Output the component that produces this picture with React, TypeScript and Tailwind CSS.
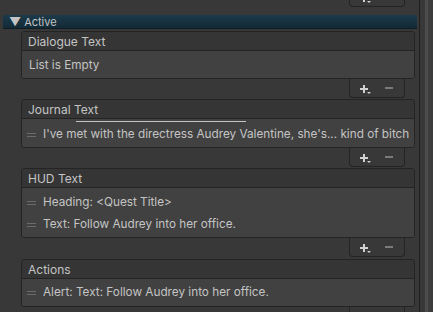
import React from 'react';

const Handle = () => (
  <div className="w-[9px] flex flex-col gap-[2px] mr-[7px]">
    <div className="h-px bg-[#6b6b6b]" />
    <div className="h-px bg-[#6b6b6b]" />
  </div>
);

const Row = ({ text }: { text: string }) => (
  <div className="h-[22px] flex items-center pl-[5px] pt-[1px]">
    <Handle />
    <span className="whitespace-nowrap">{text}</span>
  </div>
);

const Footer = ({ className = '' }: { className?: string }) => (
  <div
    className={`ml-[349px] w-[56px] h-[19px] shrink-0 border-x border-b border-[#242424] rounded-b-[4px] flex items-center ${className}`}
  >
    <div className="relative ml-[10px] w-[9px] h-[9px]">
      <div className="absolute left-0 top-[4px] w-[8px] h-[2px] bg-[#d0d0d0]" />
      <div className="absolute left-[3px] top-[1px] w-[2px] h-[8px] bg-[#d0d0d0]" />
      <div className="absolute left-[7px] top-[8px] w-0 h-0 border-x-[2px] border-x-transparent border-t-[2px] border-t-[#d0d0d0]" />
    </div>
    <div className="ml-[16px] w-[8px] h-[2px] bg-[#7a7a7a]" />
  </div>
);

const Panel = ({ title, children, bodyClass = '' }: { title: string; children: React.ReactNode; bodyClass?: string }) => (
  <div className="ml-[21px] w-[394px] shrink-0 border border-[#242424] rounded-[3px] overflow-hidden">
    <div className="h-[19px] bg-[#353535] border-b border-[#242424] flex items-center pl-[6px] pt-[1px] text-[12px]">{title}</div>
    <div className={`bg-[#414141] ${bodyClass}`}>{children}</div>
  </div>
);

export default function App() {
  return (
    <div className="w-[433px] h-[312px] bg-[#383838] flex overflow-hidden text-[11.75px] text-[#c4c4c4] font-['Inter',sans-serif]">
      <div className="w-[419px] flex flex-col">
        <Footer className="mt-[-12px]" />
        <div className="mt-[8px] ml-[3px] w-[414px] h-[14px] shrink-0 bg-gradient-to-b from-[#1b3a4a] to-[#132a36] border-b border-[#0e1c24] flex items-center pl-[6px] pt-[1px] text-[11px] leading-none">
          <span className="text-[12px] mr-[3px]">▼</span>
          Active
        </div>
        <div className="h-[2px] shrink-0" />
        <Panel title="Dialogue Text" bodyClass="h-[27px] flex items-center pl-[7px] pt-[2px]">
          List is Empty
        </Panel>
        <Footer />
        <div className="h-px shrink-0" />
        <Panel title="Journal Text" bodyClass="h-[28px] overflow-hidden">
          <div className="h-[4px] relative overflow-hidden">
            <span className="absolute left-[22px] top-[-10px] leading-none">Text:</span>
            <div className="absolute left-[54px] top-[2px] w-[170px] h-px bg-[#c4c4c4]" />
          </div>
          <Row text="I've met with the directress Audrey Valentine, she's... kind of bitch" />
        </Panel>
        <Footer />
        <div className="h-px shrink-0" />
        <Panel title="HUD Text" bodyClass="h-[49px] pt-[3px]">
          <Row text="Heading: <Quest Title>" />
          <Row text="Text: Follow Audrey into her office." />
        </Panel>
        <Footer />
        <div className="h-[2px] shrink-0" />
        <Panel title="Actions" bodyClass="h-[27px] flex items-center">
          <Row text="Alert: Text: Follow Audrey into her office." />
        </Panel>
        <Footer />
      </div>
      <div className="w-[14px] h-full border-l border-[#1f1f1f] flex">
        <div className="w-[5px] bg-[#383838]" />
        <div className="w-[3px] bg-[#4c4c4c]" />
        <div className="flex-1 bg-[#3c3c3c]" />
      </div>
    </div>
  );
}
